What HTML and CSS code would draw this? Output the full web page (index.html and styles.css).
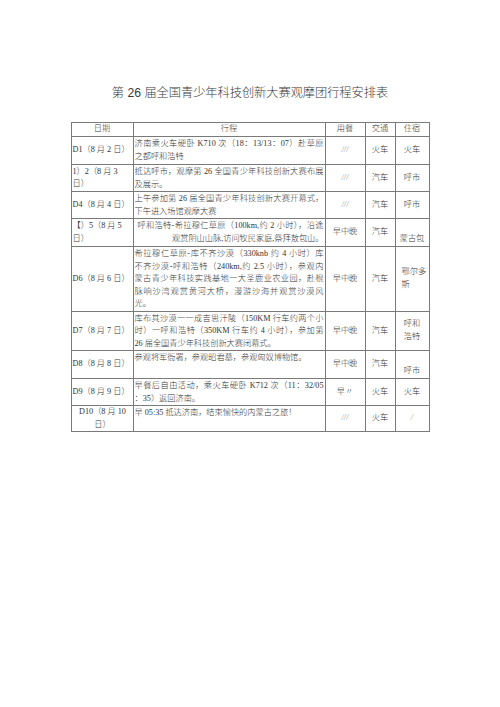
FILE: index.html
```html
<!DOCTYPE html>
<html lang="zh-CN">
<head>
<meta charset="utf-8">
<title>行程安排表</title>
<link rel="stylesheet" href="styles.css">
</head>
<body>
<div class="page">
  <h1 class="title">第 26 届全国青少年科技创新大赛观摩团行程安排表</h1>
  <table class="plan">
    <colgroup>
      <col class="c-date"><col class="c-trip"><col class="c-meal"><col class="c-traffic"><col class="c-stay">
    </colgroup>
    <tr class="r-head"><th>日期</th><th>行程</th><th>用餐</th><th>交通</th><th>住宿</th></tr>
    <tr class="r28">
      <td class="date">D1（8 月 2 日）</td>
      <td class="trip"><span class="j">济南乘火车硬卧 K710 次（18：13/13：07）赴草原</span><span class="ln">之都呼和浩特</span></td>
      <td class="slash">///</td><td>火车</td><td>火车</td>
    </tr>
    <tr class="r26">
      <td class="date">1）2（8 月 3<br>日）</td>
      <td class="trip"><span class="j">抵达呼市，观摩第 26 全国青少年科技创新大赛布展</span><span class="ln">及展示。</span></td>
      <td class="slash">///</td><td>汽车</td><td>呼市</td>
    </tr>
    <tr class="r24">
      <td class="date">D4（8 月 4 日）</td>
      <td class="trip"><span class="j">上午参加第 26 届全国青少年科技创新大赛开幕式，</span><span class="ln">下午进入场馆观摩大赛</span></td>
      <td class="slash">///</td><td>汽车</td><td>呼市</td>
    </tr>
    <tr class="r28">
      <td class="date">【）5（8 月 5<br>日）</td>
      <td class="trip"><span class="j indent">呼和浩特-希拉穆仁草原（100km,约 2 小时），沿途</span><span class="ln right">观赏阴山山脉,访问牧民家庭,祭拜敖包山。</span></td>
      <td>早中晚</td><td>汽车</td><td class="bottom">蒙古包</td>
    </tr>
    <tr class="r64">
      <td class="date">D6（8 月 6 日）</td>
      <td class="trip mid"><span class="j">希拉穆仁草原-库不齐沙漠（330knb 约 4 小时）库</span><span class="j">不齐沙漠-呼和浩特（240km,约 2.5 小时），参观内</span><span class="j">蒙古青少年科技实践基地一大圣鹿业农业园，赴根</span><span class="j">脉响沙湾观赏黄河大桥，漫游沙海并观赏沙漠风</span><span class="ln">光。</span></td>
      <td>早中晚</td><td>汽车</td><td class="left">鄂尔多<br>斯</td>
    </tr>
    <tr class="r38">
      <td class="date">D7（8 月 7 日）</td>
      <td class="trip"><span class="j">库布其沙漠一一成吉思汗陵（150KM 行车约两个小</span><span class="j">时）一呼和浩特（350KM 行车约 4 小时），参加第</span><span class="ln">26 届全国青少年科技创新大赛闭幕式。</span></td>
      <td>早中晚</td><td>汽车</td><td>呼和<br>浩特</td>
    </tr>
    <tr class="r28">
      <td class="date">D8（8 月 8 日）</td>
      <td class="trip"><span class="ln">参观将军衙署，参观昭君墓，参观匈奴博物馆。</span></td>
      <td>早中晚</td><td>汽车</td><td class="bottom">呼市</td>
    </tr>
    <tr class="r26">
      <td class="date">D9（8 月 9 日）</td>
      <td class="trip"><span class="j">早餐后自由活动，乘火车硬卧 K712 次（11：32/05</span><span class="ln">：35）返回济南。</span></td>
      <td>早〃</td><td>火车</td><td>火车</td>
    </tr>
    <tr class="r26">
      <td class="date center">D10（8 月 10<br>日）</td>
      <td class="trip"><span class="ln">早 05:35 抵达济南，结束愉快的内蒙古之旅！</span></td>
      <td class="slash">///</td><td>火车</td><td class="slash">/</td>
    </tr>
  </table>
</div>
</body>
</html>
```

FILE: styles.css
```css
html, body {
  margin: 0;
  padding: 0;
  background: #ffffff;
}

.page {
  padding-top: 85px;
}

.title {
  margin: 0;
  font: 300 12.2px/16px "Liberation Sans", "Noto Sans CJK SC", sans-serif;
  color: #3a3a3a;
  text-align: center;
}

.plan {
  margin: 21px auto 0;
  width: 358px;
  border-collapse: collapse;
  table-layout: fixed;
  font: 300 8.2px/12.5px "Liberation Serif", "Noto Sans CJK SC", serif;
  color: #333333;
}

.c-date { width: 62px; }
.c-trip { width: 192px; }
.c-meal { width: 40px; }
.c-traffic { width: 30px; }
.c-stay { width: 34px; }

.plan th,
.plan td {
  border: 1px solid #7a7a7a;
  padding: 0;
  font-weight: 300;
  text-align: center;
  vertical-align: middle;
}

.r-head { height: 14px; }
.r24 { height: 24px; }
.r26 { height: 26px; }
.r28 { height: 28px; }
.r38 { height: 38px; }
.r64 { height: 64px; }

.plan .date {
  text-align: left;
  padding-left: 1px;
}

.plan .date.center {
  text-align: center;
}

.plan .trip {
  text-align: left;
  vertical-align: top;
  padding: 1px 0 0 1px;
}

.plan .trip.mid {
  padding-top: 1px;
}

.trip .ln {
  display: block;
  white-space: nowrap;
}

.trip .j {
  display: block;
  padding-right: 1px;
  text-align: justify;
  text-align-last: justify;
}

.trip .indent {
  padding-left: 3px;
}

.trip .right {
  text-align: right;
  padding-right: 1px;
}

.plan .slash {
  color: #9a9a9a;
  font-style: italic;
}

.plan .bottom {
  vertical-align: bottom;
  padding-bottom: 1px;
}

.plan .left {
  text-align: left;
  padding-left: 6px;
}
```
